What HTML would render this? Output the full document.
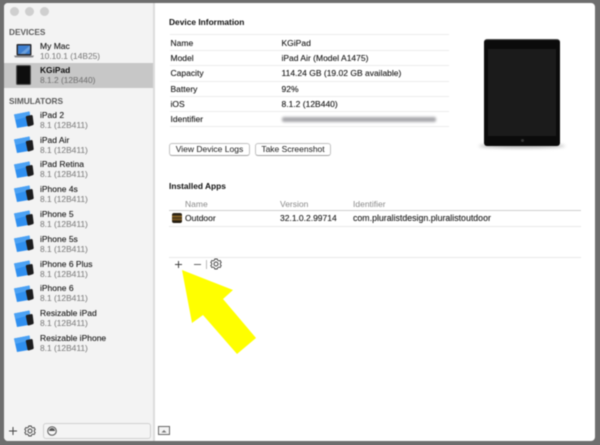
<!DOCTYPE html>
<html><head><meta charset="utf-8"><style>
html,body{margin:0;padding:0;width:600px;height:445px;overflow:hidden;background:#6e6e6e}
body{position:relative;font-family:"Liberation Sans",sans-serif;font-size:8.5px;color:#222}
#w{position:absolute;left:0;top:0;width:600px;height:445px;filter:blur(.45px)}
.a,.t,.s,.l,.h{position:absolute;white-space:nowrap}
.t{line-height:11px;color:#1c1c1c;text-shadow:0 0 .4px rgba(0,0,0,.55)}
.s{line-height:10px;color:#858585;font-size:8.4px;text-shadow:0 0 .3px rgba(0,0,0,.3)}
.h{line-height:11px;color:#5c5c5c;font-weight:bold;font-size:8.3px}
.b{font-weight:bold;color:#111;font-size:8.4px;text-shadow:none}
.l{left:170px;width:279px;height:1px;background:#ececec}
.btn{position:absolute;top:143px;height:11px;border:1px solid #c2c2c2;border-bottom-color:#a5a5a5;border-radius:3px;background:#fff;text-align:center;line-height:11px;color:#333;text-shadow:0 0 .3px rgba(0,0,0,.4)}
svg{position:absolute;overflow:visible}
</style></head><body>
<svg width="0" height="0" style="position:absolute"><defs>
<g id="sim"><path d="M0 3.500 L15.500 .5 L17.500 14.500 L3 17 Z" fill="#2f8ff0"/><path d="M0 3.500 L15.500 .5 L16 5 L1.500 9 Z" fill="#4ca2f4"/><path d="M12.500 5 L17.500 4 Q18.500 4 18.700 5 L19.700 13 Q19.700 14 18.700 14.200 L14.700 15.500 Q13.700 15.500 13.500 14.500 L11.800 6.200 Q11.800 5.300 12.500 5Z" fill="#1d1d1f"/></g>
<g id="gear" fill="none" stroke="#444"><circle r="2" stroke-width="1"/><path d="M-1.200 -5 L1.200 -5 L1.600 -3.800 L3 -3.100 L4.200 -3.500 L5.200 -1.500 L4.300 -.7 V.7 L5.200 1.500 L4.200 3.500 L3 3.100 L1.600 3.800 L1.200 5 L-1.200 5 L-1.600 3.800 L-3 3.100 L-4.200 3.500 L-5.200 1.500 L-4.300 .7 V-.7 L-5.200 -1.500 L-4.200 -3.500 L-3 -3.100 L-1.600 -3.800 Z" stroke-width=".9"/></g>
</defs></svg>
<div id="w">
<!-- window -->
<div class="a" style="left:4px;top:3px;width:591px;height:438px;background:#fff;border-radius:4px;overflow:hidden"></div>
<div class="a" style="left:4px;top:3px;width:149px;height:438px;background:#f3f3f3;border-radius:4px 0 0 4px"></div>
<div class="a" style="left:153px;top:3px;width:2px;height:438px;background:#dcdcdc"></div>

<!-- traffic lights -->
<div class="a" style="left:9.500px;top:6.500px;width:9px;height:9px;border-radius:50%;background:#cfcfcf"></div>
<div class="a" style="left:24.500px;top:6.500px;width:9px;height:9px;border-radius:50%;background:#cfcfcf"></div>
<div class="a" style="left:39.500px;top:6.500px;width:9px;height:9px;border-radius:50%;background:#cfcfcf"></div>

<!-- sidebar -->
<div class="h" style="left:9px;top:27px">DEVICES</div>
<svg style="left:14px;top:43px" width="20" height="16"><rect x="2.500" y="1" width="15" height="11.500" rx="1" fill="#2c2c30"/><rect x="4" y="2.500" width="12" height="8.500" fill="#3e7fd0"/><path d="M6 11L16 2.500V6L11 11Z" fill="#6a9fdc"/><path d="M0 12.500H20L19 14.500H1Z" fill="#8c8c8f"/></svg>
<div class="t" style="left:40px;top:41px">My Mac</div>
<div class="s" style="left:40px;top:50.500px">10.10.1 (14B25)</div>

<div class="a" style="left:4px;top:63px;width:149px;height:25px;background:#c7c7c7"></div>
<div class="a" style="left:16px;top:65px;width:15px;height:20px;background:#0e0e0e;border-radius:1.500px;border:1px solid #555;box-sizing:border-box"></div>
<div class="t b" style="left:40px;top:65px;color:#111">KGiPad</div>
<div class="s" style="left:40px;top:75px;color:#7a7a7a">8.1.2 (12B440)</div>

<div class="h" style="left:9px;top:95.500px">SIMULATORS</div>

<svg style="left:13.500px;top:111px" width="22" height="20"><use href="#sim"/></svg>
<div class="t" style="left:40px;top:110px">iPad 2</div><div class="s" style="left:40px;top:120px">8.1 (12B411)</div>
<svg style="left:13.500px;top:136px" width="22" height="20"><use href="#sim"/></svg>
<div class="t" style="left:40px;top:134.500px">iPad Air</div><div class="s" style="left:40px;top:144.500px">8.1 (12B411)</div>
<svg style="left:13.500px;top:161px" width="22" height="20"><use href="#sim"/></svg>
<div class="t" style="left:40px;top:159px">iPad Retina</div><div class="s" style="left:40px;top:169px">8.1 (12B411)</div>
<svg style="left:13.500px;top:185px" width="22" height="20"><use href="#sim"/></svg>
<div class="t" style="left:40px;top:184px">iPhone 4s</div><div class="s" style="left:40px;top:194px">8.1 (12B411)</div>
<svg style="left:13.500px;top:210px" width="22" height="20"><use href="#sim"/></svg>
<div class="t" style="left:40px;top:209px">iPhone 5</div><div class="s" style="left:40px;top:219px">8.1 (12B411)</div>
<svg style="left:13.500px;top:235px" width="22" height="20"><use href="#sim"/></svg>
<div class="t" style="left:40px;top:233.500px">iPhone 5s</div><div class="s" style="left:40px;top:243.500px">8.1 (12B411)</div>
<svg style="left:13.500px;top:260px" width="22" height="20"><use href="#sim"/></svg>
<div class="t" style="left:40px;top:258.500px">iPhone 6 Plus</div><div class="s" style="left:40px;top:268.500px">8.1 (12B411)</div>
<svg style="left:13.500px;top:285px" width="22" height="20"><use href="#sim"/></svg>
<div class="t" style="left:40px;top:283px">iPhone 6</div><div class="s" style="left:40px;top:293px">8.1 (12B411)</div>
<svg style="left:13.500px;top:310px" width="22" height="20"><use href="#sim"/></svg>
<div class="t" style="left:40px;top:308px">Resizable iPad</div><div class="s" style="left:40px;top:318px">8.1 (12B411)</div>
<svg style="left:13.500px;top:335px" width="22" height="20"><use href="#sim"/></svg>
<div class="t" style="left:40px;top:333px">Resizable iPhone</div><div class="s" style="left:40px;top:343px">8.1 (12B411)</div>

<!-- sidebar footer -->
<svg style="left:8px;top:426px" width="10" height="10"><path d="M5 1V9M1 5H9" stroke="#444" stroke-width="1"/></svg>
<svg style="left:30px;top:431px" width="1" height="1"><use href="#gear"/></svg>
<div class="a" style="left:43px;top:423px;width:106px;height:14px;border:1px solid #d0d0d0;border-radius:3px;background:#f4f4f4"></div>
<svg style="left:47px;top:426px" width="10" height="10"><circle cx="5" cy="5" r="4.300" fill="#f6f6f6" stroke="#555"/><path d="M2 5A3 3 0 0 1 8 5Z" fill="#555"/></svg>
<svg style="left:158px;top:426px" width="12" height="10"><rect x=".5" y=".5" width="11" height="8" fill="#f4f4f4" stroke="#666"/><path d="M3.500 6.500L6 4L8.500 6.500Z" fill="#777"/></svg>

<!-- Device information -->
<div class="t b" style="left:169px;top:17px">Device Information</div>
<div class="l" style="top:34px"></div>
<div class="t" style="left:170.500px;top:37.500px">Name</div><div class="t" style="left:281.500px;top:37.500px">KGiPad</div>
<div class="l" style="top:50px"></div>
<div class="t" style="left:170.500px;top:52.500px">Model</div><div class="t" style="left:281.500px;top:52.500px">iPad Air (Model A1475)</div>
<div class="l" style="top:65px"></div>
<div class="t" style="left:170.500px;top:68px">Capacity</div><div class="t" style="left:281.500px;top:68px">114.24 GB (19.02 GB available)</div>
<div class="l" style="top:81px"></div>
<div class="t" style="left:170.500px;top:83.500px">Battery</div><div class="t" style="left:281.500px;top:83.500px">92%</div>
<div class="l" style="top:96px"></div>
<div class="t" style="left:170.500px;top:98.500px">iOS</div><div class="t" style="left:281.500px;top:98.500px">8.1.2 (12B440)</div>
<div class="l" style="top:111px"></div>
<div class="t" style="left:170.500px;top:114px">Identifier</div>
<div class="a" style="left:282px;top:116.500px;width:154px;height:5px;background:#a8a8ac;filter:blur(1.300px);border-radius:2px"></div>
<div class="l" style="top:126px"></div>

<div class="btn" style="left:169px;width:79px">View Device Logs</div>
<div class="btn" style="left:255px;width:74px">Take Screenshot</div>

<!-- iPad image -->
<div class="a" style="left:479px;top:143.500px;width:86px;height:4px;background:#666;border-radius:50%;filter:blur(1.500px);opacity:.55"></div>
<div class="a" style="left:484px;top:39px;width:76px;height:107px;background:#0b0b0b;border-radius:3px;border-top:1px solid #555;box-sizing:border-box"></div>
<div class="a" style="left:488px;top:49px;width:68px;height:87px;background:#1b1b1b"></div>
<div class="a" style="left:521px;top:139px;width:3px;height:3px;border-radius:50%;background:#333"></div>

<!-- Installed apps -->
<div class="t b" style="left:169px;top:181px">Installed Apps</div>
<div class="t" style="left:185px;top:198.500px;color:#8a8a8a;text-shadow:none">Name</div>
<div class="t" style="left:280px;top:198.500px;color:#8a8a8a;text-shadow:none">Version</div>
<div class="t" style="left:353px;top:198.500px;color:#8a8a8a;text-shadow:none">Identifier</div>
<div class="a" style="left:169px;top:210px;width:412px;height:1px;background:#cfcfcf"></div>
<div class="a" style="left:172px;top:213px;width:10px;height:10px;border-radius:2px;background:linear-gradient(#2c2417 0,#2c2417 25%,#a87a28 30%,#3a2c18 50%,#8a6424 65%,#241d12 80%)"></div>
<div class="t" style="left:185px;top:213px;color:#222">Outdoor</div>
<div class="t" style="left:280px;top:213px;color:#222">32.1.0.2.99714</div>
<div class="t" style="left:353px;top:213px;color:#222;font-size:8.800px">com.pluralistdesign.pluralistoutdoor</div>
<div class="a" style="left:169px;top:226px;width:412px;height:1px;background:#e8e8e8"></div>
<div class="a" style="left:169px;top:257px;width:412px;height:1px;background:#e8e8e8"></div>

<!-- toolbar -->
<svg style="left:174px;top:259.500px" width="9" height="9"><path d="M4.500 1V8M1 4.500H8" stroke="#444" stroke-width="1"/></svg>
<svg style="left:193px;top:259.500px" width="9" height="9"><path d="M1 4.500H8" stroke="#666" stroke-width="1"/></svg>
<div class="a" style="left:206px;top:259.500px;width:1px;height:9px;background:#bbb"></div>
<svg style="left:216px;top:264px" width="1" height="1"><use href="#gear"/></svg>

<!-- arrow -->
<svg style="left:0;top:0" width="600" height="445"><polygon points="182,270 233,290 223,299 256,338 237,354 203,315 192,323" fill="#ffff00"/></svg>
</div>
</body></html>
